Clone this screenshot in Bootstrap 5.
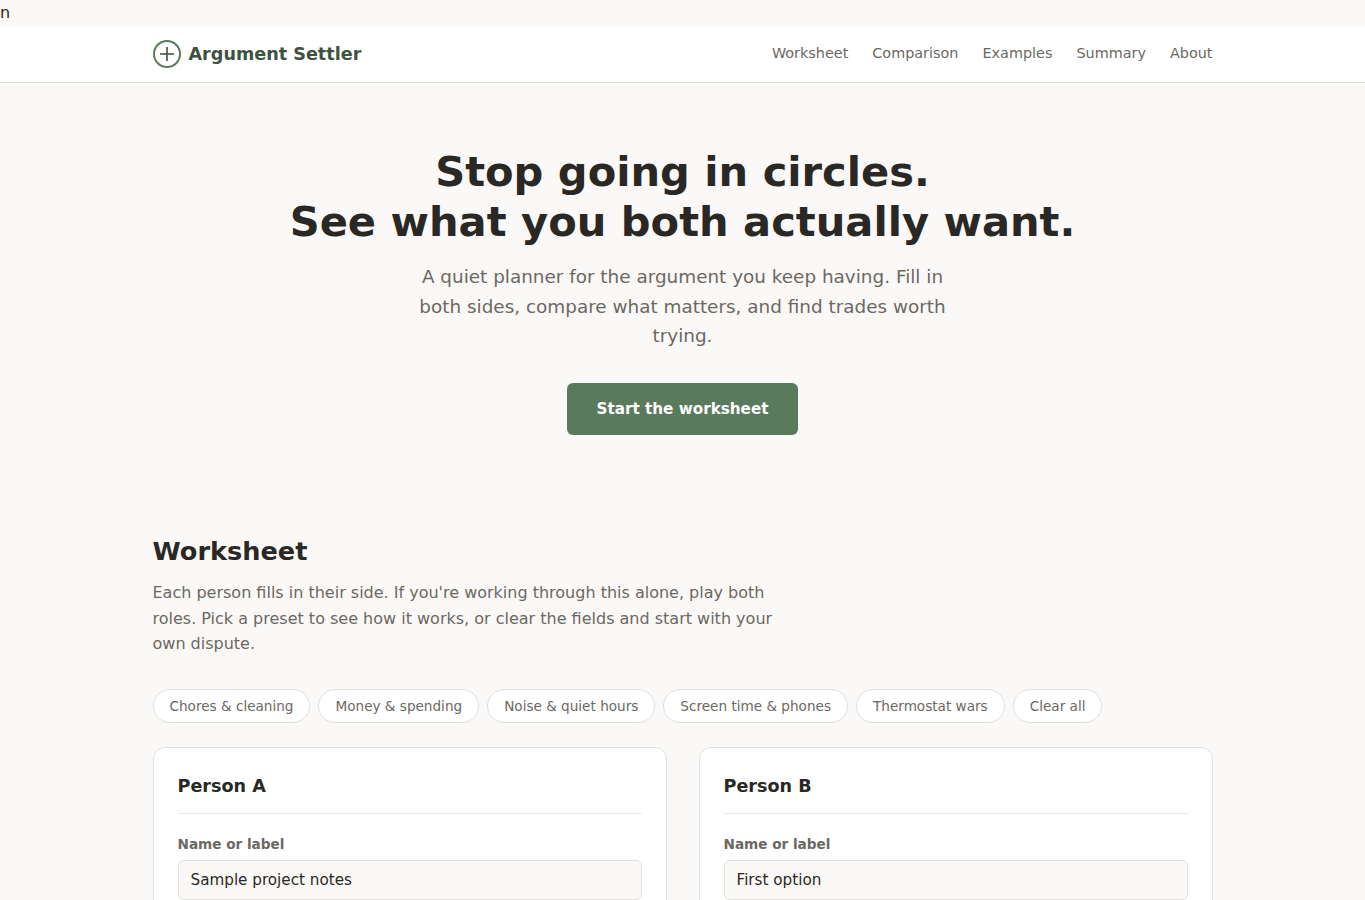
<!DOCTYPE html>
<html lang="en">
<head>
    <meta charset="UTF-8">
    <meta name="viewport" content="width=device-width, initial-scale=1">
    <title>Argument Settler</title>
    <link href="https://cdn.jsdelivr.net/npm/bootstrap@5.3.0/dist/css/bootstrap.min.css" rel="stylesheet">
    <style>
        body { font-family: "DejaVu Sans", sans-serif; background: #fbf9f7; color: #2a2824; line-height: 1.6; font-size: 16px; }
        .wrap { width: 1060px; margin: 0 auto; }
        .site-nav { background: #fff; border-bottom: 1px solid #e2e0dd; height: 57px; }
        .brand { color: #3d5240; font-weight: 700; font-size: 17.6px; text-decoration: none; gap: 8px; }
        .site-nav .nav-item-link { color: #6b6862; font-size: 14.4px; text-decoration: none; }
        .hero { padding-top: 64px; height: 452px; }
        .hero h1 { font-size: 41.6px; font-weight: 700; line-height: 50px; margin-bottom: 15.6px; color: #2a2824; }
        .hero p { font-size: 18.4px; line-height: 29.5px; color: #6b6862; width: 560px; margin: 0 auto 32.4px; }
        .btn-start { background: #5a7a5e; color: #fff; font-weight: 700; font-size: 15.2px; border: 0; border-radius: 6px; padding: 12px 30px; height: 52px; }
        h2.section-title { font-size: 25.6px; font-weight: 700; line-height: 1.3; margin-bottom: 12.3px; }
        .intro { color: #6b6862; width: 640px; font-size: 16px; margin-bottom: 31.7px; }
        .chip { background: #fff; border: 1px solid #e2e0dd; border-radius: 999px; color: #6b6862; font-size: 13.6px; padding: 6px 16px; line-height: 20px; }
        .person { background: #fff; border: 1px solid #e2e0dd; border-radius: 12px; padding: 24px; }
        .person h3 { font-size: 17.6px; font-weight: 700; line-height: 1.4; padding-top: 2px; padding-bottom: 15px; border-bottom: 1px solid #e8eaea; margin-bottom: 20px; }
        .person label { font-size: 13.6px; font-weight: 700; color: #6b6862; display: block; margin-bottom: 4px; line-height: 1.6; }
        .person .form-control { background: #fbf9f7; border: 1px solid #e2e0dd; border-radius: 6px; font-size: 15.2px; color: #2a2824; padding: 8px 12px; height: 40px; }
        .sheet { row-gap: 24px; column-gap: 32px; }
    </style>
</head>
<body>
n
<nav class="site-nav d-flex align-items-center">
    <div class="wrap d-flex justify-content-between align-items-center">
        <a class="brand d-flex align-items-center" href="#">
            <svg width="28" height="28" viewBox="0 0 28 28" fill="none" stroke="#5a7a5e" stroke-width="2"><circle cx="14" cy="14" r="13"/><path d="M14 7v14M7 14h14" stroke="#3d5240" stroke-width="1.6"/></svg>
            Argument Settler
        </a>
        <div class="d-flex" style="gap:24px">
            <a class="nav-item-link" href="#">Worksheet</a>
            <a class="nav-item-link" href="#">Comparison</a>
            <a class="nav-item-link" href="#">Examples</a>
            <a class="nav-item-link" href="#">Summary</a>
            <a class="nav-item-link" href="#">About</a>
        </div>
    </div>
</nav>

<section class="hero text-center">
    <h1>Stop going in circles.<br>See what you both actually want.</h1>
    <p>A quiet planner for the argument you keep having. Fill in both sides, compare what matters, and find trades worth trying.</p>
    <button class="btn btn-start" type="button">Start the worksheet</button>
</section>

<section class="wrap">
    <h2 class="section-title">Worksheet</h2>
    <p class="intro">Each person fills in their side. If you're working through this alone, play both roles. Pick a preset to see how it works, or clear the fields and start with your own dispute.</p>
    <div class="d-flex gap-2 mb-4">
        <button class="chip" type="button">Chores &amp; cleaning</button>
        <button class="chip" type="button">Money &amp; spending</button>
        <button class="chip" type="button">Noise &amp; quiet hours</button>
        <button class="chip" type="button">Screen time &amp; phones</button>
        <button class="chip" type="button">Thermostat wars</button>
        <button class="chip" type="button">Clear all</button>
    </div>
    <div class="d-grid sheet" style="grid-template-columns:1fr 1fr">
        <div class="person">
            <h3>Person A</h3>
            <label for="nameA">Name or label</label>
            <input id="nameA" class="form-control" value="Sample project notes">
        </div>
        <div class="person">
            <h3>Person B</h3>
            <label for="nameB">Name or label</label>
            <input id="nameB" class="form-control" value="First option">
        </div>
    </div>
</section>

<script src="https://cdn.jsdelivr.net/npm/bootstrap@5.3.0/dist/js/bootstrap.bundle.min.js"></script>
</body>
</html>
